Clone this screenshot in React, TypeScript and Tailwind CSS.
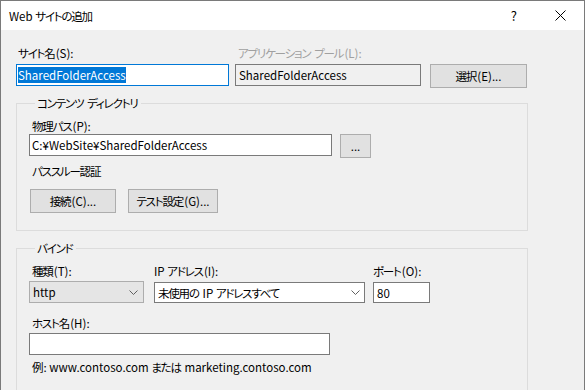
import React, { ReactNode } from 'react';

const font = "font-['Noto_Sans_CJK_JP',sans-serif] [font-feature-settings:'palt']";

// 和文部分は Yu Gothic UI に寄せて字間を詰める（末尾の詰めは mr で戻す）
function J({ children }: { children: ReactNode }) {
  return <span className="tracking-[-1.2px] mr-[1.2px]">{children}</span>;
}

function Chevron() {
  return (
    <svg width="9" height="5" viewBox="0 0 9 5" className="shrink-0">
      <path d="M0.5 0.5 L4.5 4.5 L8.5 0.5" fill="none" stroke="#606060" strokeWidth="1" />
    </svg>
  );
}

function Button({ children, w }: { children: ReactNode; w: string }) {
  return (
    <div className={`${w} h-[24px] flex items-center justify-center bg-[#e1e1e1] border border-[#adadad]`}>
      {children}
    </div>
  );
}

export default function App() {
  return (
    <div className={`w-[585px] h-[390px] overflow-hidden flex flex-col bg-[#f0f0f0] border-l border-t border-r border-[#7a7a7a] text-[11.5px] leading-[16px] text-black ${font}`}>
      {/* タイトルバー */}
      <div className="h-[29px] shrink-0 bg-white flex items-center">
        <span className="ml-[8px]">Web <J>サイトの追加</J></span>
        <span className="ml-auto text-[13px]">?</span>
        <svg width="11" height="11" viewBox="0 0 11 11" className="ml-[38px] mr-[18px]">
          <path d="M0.5 0.5 L10.5 10.5 M10.5 0.5 L0.5 10.5" stroke="#000" strokeWidth="1" />
        </svg>
      </div>

      <div className="pl-[15px] pt-[15px] flex flex-col">
        {/* サイト名 / アプリケーション プール */}
        <div className="flex items-start">
          <div className="w-[213px] flex flex-col">
            <div className="h-[19px] pl-[2px]"><J>サイト名</J>(S):</div>
            <div className="h-[22px] border border-[#0078d7] bg-white flex items-center pl-[1px]">
              <span className="bg-[#0078d7] text-white leading-[16px]">SharedFolderAccess</span>
            </div>
          </div>
          <div className="w-[186px] ml-[6px] flex flex-col">
            <div className="h-[19px] pl-[3px] text-[#a0a0a0]"><J>アプリケーション</J> <J>プール</J>(L):</div>
            <div className="h-[22px] border border-[#7a7a7a] bg-[#f0f0f0] flex items-center pl-[3px]">
              SharedFolderAccess
            </div>
          </div>
          <div className="ml-[9px] mt-[19px]">
            <Button w="w-[97px]"><J>選択</J>(E)...</Button>
          </div>
        </div>

        {/* コンテンツ ディレクトリ */}
        <fieldset className="mt-[7px] w-[512px] border border-[#dcdcdc] pl-[12px] pb-[17px]">
          <legend className="ml-[6px] px-[2px] leading-[16px]"><J>コンテンツ</J> <J>ディレクトリ</J></legend>
          <div className="pt-[7px] pl-[3px]"><J>物理パス</J>(P):</div>
          <div className="flex items-start">
            <div className="w-[303px] h-[22px] border border-[#7a7a7a] bg-white flex items-center pl-[2px]">
              C:¥WebSite¥SharedFolderAccess
            </div>
            <div className="ml-[8px]">
              <Button w="w-[31px]">...</Button>
            </div>
          </div>
          <div className="mt-[5px] pl-[3px]"><J>パススルー認証</J></div>
          <div className="mt-[10px] ml-[1px] flex gap-[12px]">
            <Button w="w-[86px]"><J>接続</J>(C)...</Button>
            <Button w="w-[90px]"><J>テスト設定</J>(G)...</Button>
          </div>
        </fieldset>

        {/* バインド */}
        <fieldset className="mt-[9px] w-[512px] border border-[#dcdcdc] pl-[12px] pb-[40px]">
          <legend className="ml-[6px] px-[2px] leading-[16px]"><J>バインド</J></legend>
          <div className="pt-[7px] flex items-start">
            <div className="w-[115px] flex flex-col">
              <div className="pl-[3px] h-[18px]"><J>種類</J>(T):</div>
              <div className="h-[22px] border border-[#adadad] bg-[#e5e5e5] flex items-center pl-[3px] pr-[5px]">
                <span className="flex-1">http</span>
                <Chevron />
              </div>
            </div>
            <div className="w-[211px] ml-[10px] flex flex-col">
              <div className="h-[19px]">IP <J>アドレス</J>(I):</div>
              <div className="h-[21px] border border-[#7a7a7a] bg-white flex items-center pl-[3px] pr-[4px]">
                <span className="flex-1"><J>未使用の</J> IP <J>アドレスすべて</J></span>
                <Chevron />
              </div>
            </div>
            <div className="w-[57px] ml-[8px] flex flex-col">
              <div className="h-[19px]"><J>ポート</J>(O):</div>
              <div className="h-[21px] border border-[#7a7a7a] bg-white flex items-center pl-[3px]">80</div>
            </div>
          </div>
          <div className="mt-[12px] pl-[3px]"><J>ホスト名</J>(H):</div>
          <div className="mt-[2px] w-[301px] h-[22px] border border-[#7a7a7a] bg-white" />
          <div className="mt-[4px] pl-[3px]"><J>例</J>: www.contoso.com <J>または</J> marketing.contoso.com</div>
        </fieldset>
      </div>
    </div>
  );
}
